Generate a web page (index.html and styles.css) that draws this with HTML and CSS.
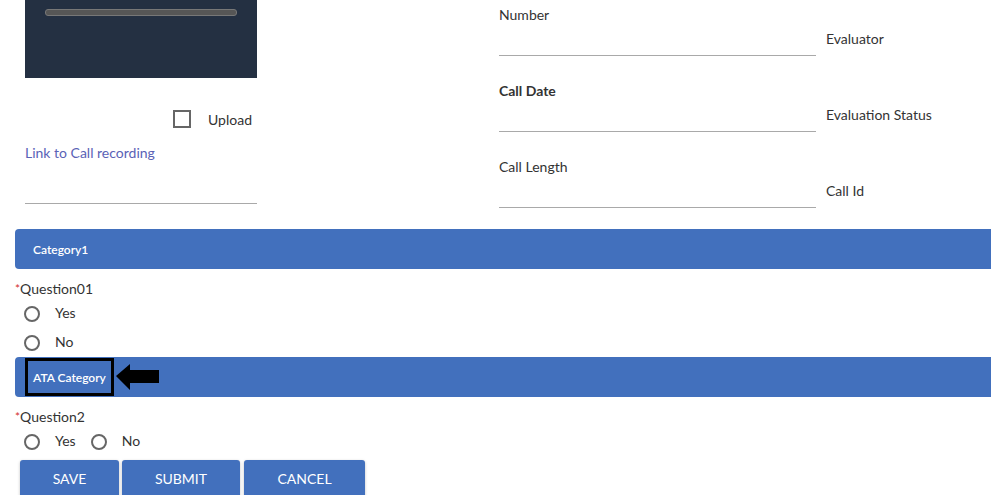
FILE: index.html
```html
<!DOCTYPE html>
<html lang="en">
<head>
  <meta charset="UTF-8">
  <meta name="viewport" content="width=device-width, initial-scale=1.0">
  <title>Call Evaluation</title>
  <link rel="stylesheet" href="styles.css">
</head>
<body>
  <div class="top">
    <div class="media">
      <div class="player">
        <div class="progress"></div>
      </div>
      <div class="upload-row">
        <input type="checkbox" id="upload" class="check">
        <label for="upload">Upload</label>
      </div>
      <a class="link" href="#">Link to Call recording</a>
      <div class="link-line"></div>
    </div>

    <div class="fields">
      <div class="field-row">
        <div class="field">
          <label>Number</label>
        </div>
        <span class="side-label">Evaluator</span>
      </div>
      <div class="field-row">
        <div class="field">
          <label class="bold">Call Date</label>
        </div>
        <span class="side-label">Evaluation Status</span>
      </div>
      <div class="field-row">
        <div class="field">
          <label>Call Length</label>
        </div>
        <span class="side-label">Call Id</span>
      </div>
    </div>
  </div>

  <div class="category">Category1</div>

  <div class="question"><span class="req">*</span>Question01</div>
  <div class="options stacked">
    <label class="option"><input type="radio" name="q1" class="radio">Yes</label>
    <label class="option"><input type="radio" name="q1" class="radio">No</label>
  </div>

  <div class="category boxed">
    <span class="highlight">ATA Category</span>
    <svg class="arrow" width="44" height="27" viewBox="0 0 44 27">
      <polygon points="0,12 14,0 14,6 43,6 43,19 14,19 14,26" fill="#000"/>
    </svg>
  </div>

  <div class="question"><span class="req">*</span>Question2</div>
  <div class="options inline">
    <label class="option"><input type="radio" name="q2" class="radio">Yes</label>
    <label class="option"><input type="radio" name="q2" class="radio">No</label>
  </div>

  <div class="actions">
    <button class="btn save">SAVE</button>
    <button class="btn submit">SUBMIT</button>
    <button class="btn cancel">CANCEL</button>
  </div>
</body>
</html>
```

FILE: styles.css
```css
:root {
  --blue: #4270bd;
  --text-color: #333;
  --line-color: #a9a9a9;
  --dark: #243042;
}

body {
  font-family: Lato, 'Open Sans', sans-serif;
  font-size: 14px;
  color: var(--text-color);
  margin: 0;
  overflow: hidden;
}

.top {
  display: flex;
  padding-left: 25px;
}

.media {
  width: 232px;
}

.player {
  height: 78px;
  background: var(--dark);
  padding: 9px 20px 0;
  box-sizing: border-box;
}

.progress {
  height: 5px;
  background: #565656;
  border: 1px solid #777;
  border-radius: 3px;
}

.upload-row {
  display: flex;
  align-items: center;
  justify-content: flex-end;
  gap: 17px;
  margin-top: 31px;
  padding-right: 5px;
  height: 20px;
}

.check {
  appearance: none;
  width: 18px;
  height: 18px;
  margin: 0;
  border: 2px solid #666;
  box-sizing: border-box;
}

.link {
  display: block;
  margin-top: 14px;
  line-height: 20px;
  color: #5a62b6;
  text-decoration: none;
}

.link-line {
  margin-top: 40px;
  border-bottom: 1px solid var(--line-color);
}

.fields {
  margin-left: 242px;
  padding-top: 5px;
}

.field-row {
  display: flex;
  height: 76px;
}

.field-row:last-child {
  height: 51px;
}

.field {
  width: 317px;
  height: 51px;
  border-bottom: 1px solid var(--line-color);
  box-sizing: border-box;
}

.field label,
.side-label {
  display: block;
  line-height: 20px;
}

.bold {
  font-weight: bold;
}

.side-label {
  margin: 24px 0 0 10px;
}

.category {
  display: flex;
  align-items: center;
  height: 40px;
  margin: 21px 0 0 15px;
  padding-left: 18px;
  background: var(--blue);
  border-radius: 4px 0 0 4px;
  color: #fff;
  font-size: 12px;
  font-weight: 600;
}

.category.boxed {
  margin-top: 0;
  padding-left: 10px;
}

.highlight {
  display: flex;
  align-items: center;
  height: 38px;
  padding: 0 5px;
  border: 3px solid #000;
  box-sizing: border-box;
}

.arrow {
  margin-left: 2px;
}

.question {
  margin: 10px 0 0 15px;
  line-height: 20px;
}

.req {
  color: #d32f2f;
  font-size: 12px;
  vertical-align: top;
}

.options {
  padding-left: 24px;
}

.options.stacked .option {
  display: flex;
  height: 29px;
}

.options.stacked {
  margin-top: -1px;
  padding-bottom: 1px;
}

.options.inline {
  display: flex;
  gap: 15px;
  height: 27px;
}

.option {
  display: flex;
  align-items: center;
  gap: 15px;
}

.radio {
  appearance: none;
  width: 16px;
  height: 16px;
  margin: 2px 0 0;
  border: 2px solid #666;
  border-radius: 50%;
  box-sizing: border-box;
}

.actions {
  display: flex;
  gap: 3px;
  margin: 6px 0 0 20px;
}

.btn {
  height: 40px;
  border: none;
  border-radius: 3px 3px 0 0;
  background: var(--blue);
  color: #fff;
  font-family: inherit;
  font-size: 14px;
  box-shadow: 0 1px 3px rgba(0, 0, 0, 0.25);
  padding: 0 0 4px;
}

.save { width: 99px; }
.submit { width: 118px; }
.cancel { width: 121px; margin-left: 1px; }
```
